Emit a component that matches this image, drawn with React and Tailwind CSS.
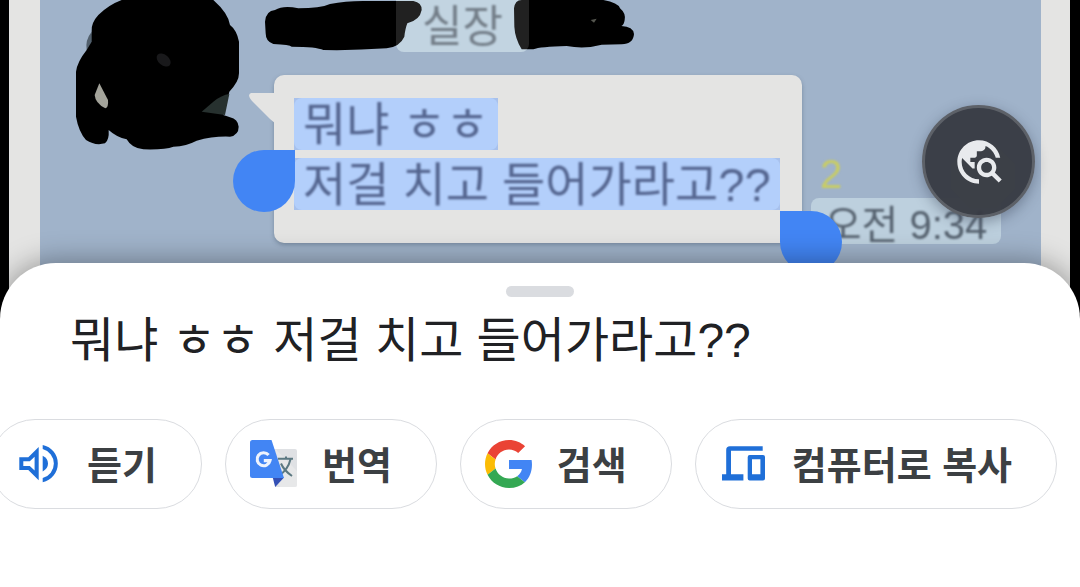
import React from "react";

function AvatarScribble() {
  return (
    <svg viewBox="210 0 540 450" className="ml-[30px] h-[150px] w-[180px] shrink-0 blur-[0.5px]" aria-hidden="true">
      <path
        d="M365 0Q325 15 295 45Q272 70 275 95L260 150Q232 185 228 215V350Q236 395 258 420Q285 438 315 430Q328 420 326 390Q350 412 380 418Q395 445 430 448Q495 450 520 440Q560 438 590 422Q640 408 690 410Q716 405 716 380Q714 358 690 352L670 345L688 275Q717 245 717 220V125Q710 90 690 75Q685 40 640 0Z"
        fill="#000"
      />
      <path d="M298 250L324 300Q326 322 316 325Q286 310 284 285Z" fill="#a3a39a" />
      <path d="M688 282Q665 285 640 305L605 335L675 345Z" fill="#27312f" />
      <ellipse cx="491" cy="180" rx="24" ry="16" fill="#19191b" transform="rotate(40 491 180)" />
      <path d="M275 95Q255 120 260 150L275 125Z" fill="#52606d" />
    </svg>
  );
}

function NameScribble() {
  return (
    <svg viewBox="129 0 1122 156" className="absolute top-0 -left-[11px] h-[52px] w-[374px] blur-[0.5px]" aria-hidden="true">
      <path d="M135 65Q138 32 165 30Q190 15 235 25Q300 25 330 12Q380 2 440 3H580Q606 8 605 30Q600 60 562 70Q556 85 553 110Q540 140 500 145Q400 152 310 150Q290 140 215 140Q210 134 160 132Q137 125 137 100Z" fill="#000" />
      <path d="M882 25Q885 0 905 0H1150Q1195 8 1200 25Q1218 40 1214 60Q1212 75 1204 78Q1240 80 1242 102Q1240 132 1205 133L1145 134Q1095 148 1040 138Q960 140 940 148H905Q885 115 883 80Z" fill="#000" />
      <path d="M1112 60L1130 56L1122 68Z" fill="#55564f" />
    </svg>
  );
}

function TravelExploreIcon() {
  return (
    <svg viewBox="0 0 24 24" className="relative size-[52px]" fill="#e8eaed" aria-hidden="true">
      <path d="M19.3 16.9c.4-.7.7-1.5.7-2.4 0-2.5-2-4.5-4.5-4.5S11 12 11 14.5s2 4.5 4.5 4.5c.9 0 1.7-.3 2.4-.7l3.2 3.2 1.4-1.4-3.2-3.2zm-3.8.1c-1.4 0-2.5-1.1-2.5-2.5s1.1-2.5 2.5-2.5 2.5 1.1 2.5 2.5-1.1 2.5-2.5 2.5zM12 20v2C6.48 22 2 17.52 2 12S6.48 2 12 2c4.84 0 8.87 3.44 9.8 8h-2.07c-.64-2.46-2.4-4.47-4.73-5.41V5c0 1.1-.9 2-2 2h-2v2c0 .55-.45 1-1 1H8v2h2v3H9l-4.79-4.79C4.08 10.79 4 11.38 4 12c0 4.41 3.59 8 8 8z" />
    </svg>
  );
}

function SpeakerIcon() {
  return (
    <svg viewBox="0 0 48 48" className="size-12 shrink-0" fill="#1f6fd8" aria-hidden="true">
      <path fillRule="evenodd" d="M4.3 17.3H13.3L23.7 7V40.3L13.3 30H4.3ZM8.3 21.3V26H14.8L19.6 30.6V16.7L14.8 21.3Z" />
      <path d="M27.7 15.8Q33 18.5 33 23.6T27.7 31.4Z" />
      <path d="M27.7 5A19 19 0 0 1 27.7 42.2V38.1A15 15 0 0 0 27.7 9.1Z" />
    </svg>
  );
}

function TranslateIcon() {
  return (
    <svg viewBox="0 0 48 48" className="size-12 shrink-0" aria-hidden="true">
      <path d="M20 9H45Q47 9 47 11V45Q47 47 45 47H25Z" fill="#dfe1e4" />
      <path d="M25.5 9L47 31V45Q47 47 45 47H30L25 38Z" fill="#ececed" opacity=".6" />
      <path d="M28 18.8H43M36 16.5V19M40.6 19Q38 30 28.5 36M31 23.5Q34 30.5 42 36" fill="none" stroke="#5b7881" strokeWidth="2" />
      <path d="M22.7 37.5H34L25.2 47Z" fill="#3450b5" />
      <path d="M2.5 0H21.5L34 38H2.5Q0 38 0 35.5V2.5Q0 0 2.5 0Z" fill="#4285f4" />
      <path d="M18.6 15A6.5 6.5 0 1 0 20 20.6H13.8" fill="none" stroke="#eef3fd" strokeWidth="3.1" />
    </svg>
  );
}

function GoogleIcon() {
  return (
    <svg viewBox="0 0 48 48" className="size-12 shrink-0" aria-hidden="true">
      <path fill="#EA4335" d="M24 9.5c3.54 0 6.71 1.22 9.21 3.6l6.85-6.85C35.9 2.38 30.47 0 24 0 14.62 0 6.51 5.38 2.56 13.22l7.98 6.19C12.43 13.72 17.74 9.5 24 9.5z" />
      <path fill="#4285F4" d="M46.98 24.55c0-1.57-.15-3.09-.38-4.55H24v9.02h12.94c-.58 2.96-2.26 5.48-4.78 7.18l7.73 6c4.51-4.18 7.09-10.36 7.09-17.65z" />
      <path fill="#FBBC05" d="M10.53 28.59c-.48-1.45-.76-2.99-.76-4.59s.27-3.14.76-4.59l-7.98-6.19C.92 16.46 0 20.12 0 24c0 3.88.92 7.54 2.56 10.78l7.97-6.19z" />
      <path fill="#34A853" d="M24 48c6.48 0 11.93-2.13 15.89-5.81l-7.73-6c-2.15 1.45-4.92 2.3-8.16 2.3-6.26 0-11.57-4.22-13.47-9.91l-7.98 6.19C6.51 42.62 14.62 48 24 48z" />
    </svg>
  );
}

function DevicesIcon() {
  return (
    <svg viewBox="0 0 48 48" className="size-12 shrink-0" fill="#1f6fd8" aria-hidden="true">
      <path d="M42.7 6.3V10.7H11V34.3H23.4V40.4H2V34.3H6.2V10Q6.2 6.3 10 6.3Z" />
      <path fillRule="evenodd" d="M29.7 15H43Q45 15 45 17V38.6Q45 40.6 43 40.6H29.7Q27.7 40.6 27.7 38.6V17Q27.7 15 29.7 15ZM32 19.2V34.2H40.4V19.2Z" />
    </svg>
  );
}

function Chip({ icon, children }) {
  return (
    <button
      type="button"
      className="flex h-[90px] shrink-0 items-center gap-6 rounded-full border border-[#dadce0] bg-white pr-[44px] pl-6 text-[38px] leading-[48px] font-bold whitespace-nowrap text-[#3c4043]"
    >
      {icon}
      <span className="pt-1">{children}</span>
    </button>
  );
}

function SelectedLine({ children }) {
  return (
    <mark className="block h-[52px] w-fit bg-[#a8c1ec] text-[47px] leading-[54px] whitespace-nowrap text-[#54658f]">
      <span className="block h-full rounded-lg bg-[#b3cffb] px-[9px]">
        <span className="blur-[1px]">{children}</span>
      </span>
    </mark>
  );
}

export default function App() {
  return (
    <main className="flex min-h-screen flex-col overflow-hidden bg-black font-['Liberation_Sans','Noto_Sans_CJK_KR',sans-serif]">
      <section className="relative h-[320px] overflow-hidden pr-[10px] pl-[9px]">
        <div className="h-full bg-[#e4e4e3] pr-[29px] pl-[31px]">
          <div className="flex h-full items-start bg-[#a0b3ca]">
            <AvatarScribble />
            <div className="relative ml-6 shrink-0">
              <div className="ml-[122px] h-[52px] w-[133px] rounded-b-lg bg-[#b9cedd] text-center text-[44px] leading-[54px] text-[#5d6975]">
                <span className="blur-[1px]">실장</span>
              </div>
              <NameScribble />
              <span className="absolute top-0 left-[122px] h-[52px] w-[133px] rounded-b-lg bg-white/13" />
              <div className="relative mt-[23px] flex h-[168px] w-[528px] flex-col gap-2 rounded-[10px] bg-[#e4e4e3] pt-[23px] pl-5 shadow-[0_2px_4px_rgba(70,90,110,0.45)]">
                <svg viewBox="0 0 28 34" className="absolute top-[17px] -left-[26px] h-[34px] w-7" aria-hidden="true">
                  <path d="M3 1H28V32L22 27L6 11Q-2 3 3 1Z" fill="#e4e4e3" />
                </svg>
                <SelectedLine>뭐냐 ㅎㅎ</SelectedLine>
                <SelectedLine>저걸 치고 들어가라고??</SelectedLine>
                <span className="absolute top-[75px] -left-[41px] size-[62px] rounded-full rounded-tr-none bg-[#4285f4]" />
                <span className="absolute top-[136px] left-[506px] z-10 size-[62px] rounded-full rounded-tl-none bg-[#4285f4]" />
              </div>
            </div>
            <div className="ml-[9px] shrink-0 pt-[150px]">
              <div className="h-12 pl-[9px] text-[40px] leading-[48px] text-[#c9cd62] blur-[1px]">2</div>
              <div className="h-[46px] w-[190px] rounded-lg bg-[#bdd0de] text-center text-[40px] leading-[54px] whitespace-nowrap text-[#56626f]">
                <span className="blur-[1px]">오전 9:34</span>
              </div>
            </div>
          </div>
        </div>
        <button
          type="button"
          aria-label="이미지 검색"
          className="absolute top-[105px] right-[45px] flex size-[113px] items-center justify-center rounded-full border-3 border-[#5d6168] bg-[#383b43]/97 shadow-[0_4px_14px_rgba(40,50,70,0.4)]"
        >
          <svg viewBox="0 0 107 107" className="absolute inset-0 size-full" aria-hidden="true">
            <path d="M45 37H71L90 56V81L71 100H45L26 81V56Z" fill="#3c4047" />
          </svg>
          <TravelExploreIcon />
        </button>
      </section>

      <section className="relative z-10 -mt-[57px] flex-1 rounded-t-[56px] bg-white shadow-[0_-2px_28px_rgba(0,0,0,0.35)]">
        <div className="mx-auto mt-[23px] h-[11px] w-[68px] rounded-full bg-[#dadce0]" />
        <p className="mt-[14px] px-[70px] text-[48px] leading-[60px] text-[#202124]">뭐냐 ㅎㅎ 저걸 치고 들어가라고??</p>
        <div className="mt-[48px] -ml-[10px] flex gap-[23px] pb-12">
          <Chip icon={<SpeakerIcon />}>듣기</Chip>
          <Chip icon={<TranslateIcon />}>번역</Chip>
          <Chip icon={<GoogleIcon />}>검색</Chip>
          <Chip icon={<DevicesIcon />}>컴퓨터로 복사</Chip>
        </div>
      </section>
    </main>
  );
}
